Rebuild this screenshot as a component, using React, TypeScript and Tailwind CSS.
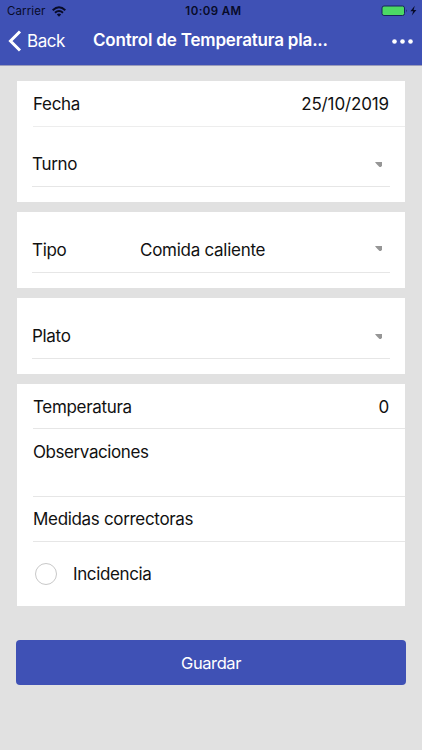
import React from "react";

function Arrow({ className = "" }: { className?: string }) {
  return (
    <svg className={`h-[5px] w-[8px] ${className}`} viewBox="0 0 8 5">
      <path d="M0 0H7V3.6L6 5H4.5L3 3.6L1.3 1.8Z" fill="#969696" />
    </svg>
  );
}

function SelectRow({ label, value, arrow = "" }: { label: string; value?: string; arrow?: string }) {
  return (
    <div className="ml-[15px] mr-[15px] flex h-[45px] items-center border-b border-[#e6e6e6] pr-[7px]">
      <span className="w-[108px] pt-[2px] tracking-[-0.3px]">{label}</span>
      <span className="flex-1 whitespace-nowrap pt-[2px] tracking-[-0.27px]">{value}</span>
      <Arrow className={arrow} />
    </div>
  );
}

export default function App() {
  return (
    <div className="flex h-[750px] w-[422px] flex-col overflow-hidden bg-[#e1e1e1] font-['Inter','Liberation_Sans',sans-serif] text-[17px] text-[#111]">
      <header className="h-[66px] shrink-0 border-b border-[#9a9cba] bg-[#3f51b5]">
        <div className="grid h-[22px] grid-cols-3 items-center text-[11.5px] leading-[14px] text-[#080b28]">
          <div className="flex items-center gap-[6px] pl-[7px]">
            <span className="tracking-[0.12px]">Carrier</span>
            <svg className="h-[11px] w-[14px]" viewBox="0 0 14 11">
              <g fill="none" stroke="#080b28" strokeWidth="2">
                <path d="M0.7 4.2Q7 -1.6 13.3 4.2" />
                <path d="M3 6.7Q7 3.2 11 6.7" />
              </g>
              <path d="M4.8 8.4Q7 6.6 9.2 8.4L7 10.7Z" fill="#080b28" />
            </svg>
          </div>
          <span className="whitespace-nowrap pl-[5px] text-center font-semibold tracking-[0.42px]">10:09 AM</span>
          <div className="flex items-center justify-end pr-[4px]">
            <svg className="h-[12px] w-[38px]" viewBox="0 0 38 12">
              <rect x="2" y="1" width="22.5" height="9.5" rx="2" fill="#4cd964" stroke="#17245c" />
              <path d="M26 4.2Q27.5 5.7 26 7.3Z" fill="#17245c" />
              <path d="M34.8 0.8L30.4 6.3H33.2L31.8 10.5L36.4 5H33.6Z" fill="#080b28" />
            </svg>
          </div>
        </div>
        <div className="flex h-[38px] items-center text-white">
          <svg className="ml-[8px] h-[22px] w-[14px] shrink-0" viewBox="0 0 14 22">
            <path d="M12 1.5L2.5 11L12 20.5" fill="none" stroke="white" strokeWidth="3" />
          </svg>
          <span className="ml-[5px] w-[66px] shrink-0 pt-[2px] tracking-[-0.45px]">Back</span>
          <h1 className="flex-1 whitespace-nowrap font-semibold tracking-[-0.18px]">Control de Temperatura pla...</h1>
          <svg className="mr-[9px] h-[5px] w-[21px] shrink-0" viewBox="0 0 21 5">
            <g fill="white">
              <circle cx="2.5" cy="2.5" r="2.3" />
              <circle cx="10.5" cy="2.5" r="2.3" />
              <circle cx="18.5" cy="2.5" r="2.3" />
            </g>
          </svg>
        </div>
      </header>

      <main className="flex flex-col gap-[10px] px-[17px] pt-[15px]">
        <section className="h-[121px] bg-white">
          <div className="ml-[16px] flex h-[46px] items-center justify-between border-b border-[#ededed] pr-[16px] pt-[2px]">
            <span className="tracking-[-0.3px]">Fecha</span>
            <span className="tracking-[-0.13px]">25/10/2019</span>
          </div>
          <div className="pt-[15px]">
            <SelectRow label="Turno" />
          </div>
        </section>
        <section className="h-[76px] bg-white pt-[16px]">
          <SelectRow label="Tipo" value="Comida caliente" arrow="mb-[4px]" />
        </section>
        <section className="h-[76px] bg-white pt-[16px]">
          <SelectRow label="Plato" />
        </section>
        <section className="h-[222px] bg-white pl-[16px] tracking-[-0.32px]">
          <div className="flex h-[45px] items-center justify-between border-b border-[#e6e6e6] pr-[16px] pt-[3px]">
            <span>Temperatura</span>
            <span>0</span>
          </div>
          <div className="flex h-[68px] border-b border-[#e6e6e6] pt-[11px] tracking-[-0.42px]">Observaciones</div>
          <div className="flex h-[45px] items-center border-b border-[#e6e6e6] pt-[2px]">Medidas correctoras</div>
          <div className="flex h-[64px] items-center pl-[2px]">
            <span className="h-[22px] w-[22px] rounded-full border border-[#c8c8c8]" />
            <span className="ml-[16px] pt-[2px] tracking-[-0.38px]">Incidencia</span>
          </div>
        </section>
        <button className="-mx-px mt-[24px] h-[45px] rounded-[4px] bg-[#3f51b5] pt-[1px] text-[16.5px] tracking-[-0.4px] text-white">Guardar</button>
      </main>
    </div>
  );
}
